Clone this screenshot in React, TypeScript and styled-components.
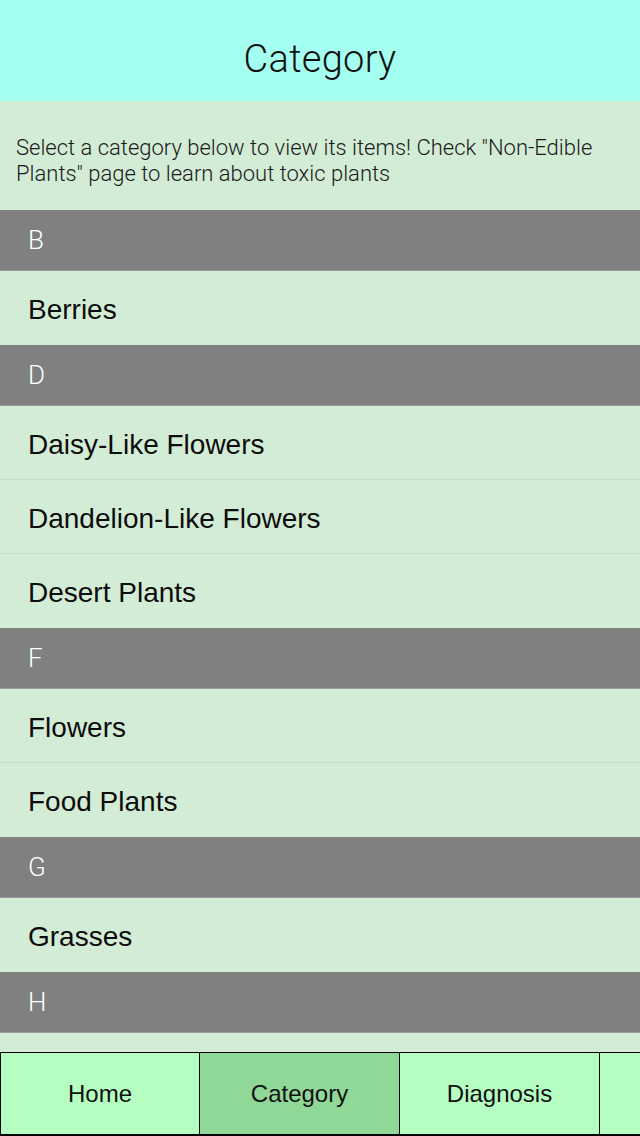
import React from 'react'
import styled, { createGlobalStyle } from 'styled-components'

const GlobalStyle = createGlobalStyle`
  html, body {
    margin: 0;
    padding: 0;
    background: #d3ecd6;
  }
  * { box-sizing: border-box; }
`

const Screen = styled.div`
  display: flex;
  flex-direction: column;
  width: 640px;
  height: 1136px;
  overflow: hidden;
  font-family: "Liberation Sans", Arial, sans-serif;
  color: #000;
  background: #d3ecd6;
`

const NavBar = styled.header`
  flex: none;
  height: 101px;
  padding-top: 16px;
  display: flex;
  align-items: center;
  justify-content: center;
  background: #a5fff0;
`

const NavTitle = styled.h1`
  margin: 0;
  font-family: Roboto, "Liberation Sans", sans-serif;
  font-weight: 300;
  font-size: 38px;
  letter-spacing: 0.3px;
  color: #111;
`

const Intro = styled.p`
  flex: none;
  margin: 0;
  padding: 34px 16px 23px;
  font-family: Roboto, "Liberation Sans", sans-serif;
  font-weight: 300;
  font-size: 22px;
  line-height: 26px;
  color: #1a1a1a;
  background: #d3ecd6;
`

const List = styled.div`
  flex: 1;
  overflow: hidden;
`

const SectionHeader = styled.div`
  height: 61px;
  display: flex;
  align-items: center;
  padding-left: 28px;
  background: #808080;
  border-bottom: 1px solid #9a9a9a;
  color: #fff;
  font-family: Roboto, "Liberation Sans", sans-serif;
  font-weight: 300;
  font-size: 26px;
`

const Row = styled.div<{ $last?: boolean }>`
  height: 74px;
  display: flex;
  align-items: center;
  padding: 4px 0 0 28px;
  font-size: 28px;
  color: #0d0d0d;
  background: #d3ecd6;
  border-bottom: 1px solid ${p => (p.$last ? '#d3ecd6' : '#c5dcc8')};
`

const TabBar = styled.nav`
  flex: none;
  height: 84px;
  display: flex;
  overflow: hidden;
  border-top: 1px solid #000;
  border-bottom: 2px solid #000;
  background: #b5fdc0;
`

const Tab = styled.div<{ $active?: boolean }>`
  flex: none;
  width: 200px;
  display: flex;
  align-items: center;
  justify-content: center;
  border-right: 1px solid #000;
  background: ${p => (p.$active ? '#90d898' : '#b5fdc0')};
  font-size: 24px;
  color: #111;
  &:first-child { border-left: 1px solid #000; }
`

const sections: [string, string[]][] = [
  ['B', ['Berries']],
  ['D', ['Daisy-Like Flowers', 'Dandelion-Like Flowers', 'Desert Plants']],
  ['F', ['Flowers', 'Food Plants']],
  ['G', ['Grasses']],
  ['H', ['']],
]

const tabs = ['Home', 'Category', 'Diagnosis', 'More']

export default function App() {
  return (
    <Screen>
      <GlobalStyle />
      <NavBar>
        <NavTitle>Category</NavTitle>
      </NavBar>
      <List>
        <Intro>
          Select a category below to view its items! Check "Non-Edible Plants" page to learn about toxic plants
        </Intro>
        {sections.map(([letter, items]) => (
          <section key={letter}>
            <SectionHeader>{letter}</SectionHeader>
            {items.map((item, i) => (
              <Row key={item || i} $last={i === items.length - 1}>{item}</Row>
            ))}
          </section>
        ))}
      </List>
      <TabBar>
        {tabs.map(t => (
          <Tab key={t} $active={t === 'Category'}>{t}</Tab>
        ))}
      </TabBar>
    </Screen>
  )
}
